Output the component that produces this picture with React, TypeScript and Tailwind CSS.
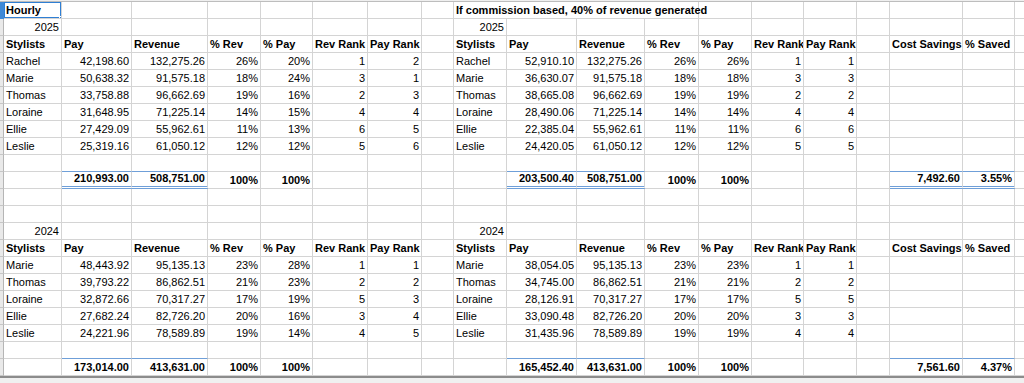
import React from 'react';

type Cell = { v?: string; r?: boolean; b?: boolean; span?: number; line?: 'top' | 'dbl' };

// column widths in px (row header strip excluded)
const cols = [
  'w-[58px]', 'w-[70px]', 'w-[76px]', 'w-[53px]', 'w-[52px]', 'w-[55px]', 'w-[54px]', 'w-[32px]',
  'w-[53px]', 'w-[70px]', 'w-[68px]', 'w-[54px]', 'w-[53px]', 'w-[52px]', 'w-[53px]', 'w-[33px]',
  'w-[73px]', 'w-[52px]',
];

const headers = ['Stylists', 'Pay', 'Revenue', '% Rev', '% Pay', 'Rev Rank', 'Pay Rank'];

const hourly2025 = [
  ['Rachel', '42,198.60', '132,275.26', '26%', '20%', '1', '2'],
  ['Marie', '50,638.32', '91,575.18', '18%', '24%', '3', '1'],
  ['Thomas', '33,758.88', '96,662.69', '19%', '16%', '2', '3'],
  ['Loraine', '31,648.95', '71,225.14', '14%', '15%', '4', '4'],
  ['Ellie', '27,429.09', '55,962.61', '11%', '13%', '6', '5'],
  ['Leslie', '25,319.16', '61,050.12', '12%', '12%', '5', '6'],
];

const commission2025 = [
  ['Rachel', '52,910.10', '132,275.26', '26%', '26%', '1', '1'],
  ['Marie', '36,630.07', '91,575.18', '18%', '18%', '3', '3'],
  ['Thomas', '38,665.08', '96,662.69', '19%', '19%', '2', '2'],
  ['Loraine', '28,490.06', '71,225.14', '14%', '14%', '4', '4'],
  ['Ellie', '22,385.04', '55,962.61', '11%', '11%', '6', '6'],
  ['Leslie', '24,420.05', '61,050.12', '12%', '12%', '5', '5'],
];

const hourly2024 = [
  ['Marie', '48,443.92', '95,135.13', '23%', '28%', '1', '1'],
  ['Thomas', '39,793.22', '86,862.51', '21%', '23%', '2', '2'],
  ['Loraine', '32,872.66', '70,317.27', '17%', '19%', '5', '3'],
  ['Ellie', '27,682.24', '82,726.20', '20%', '16%', '3', '4'],
  ['Leslie', '24,221.96', '78,589.89', '19%', '14%', '4', '5'],
];

const commission2024 = [
  ['Marie', '38,054.05', '95,135.13', '23%', '23%', '1', '1'],
  ['Thomas', '34,745.00', '86,862.51', '21%', '21%', '2', '2'],
  ['Loraine', '28,126.91', '70,317.27', '17%', '17%', '5', '5'],
  ['Ellie', '33,090.48', '82,726.20', '20%', '20%', '3', '3'],
  ['Leslie', '31,435.96', '78,589.89', '19%', '19%', '4', '4'],
];

type Row = Record<number, Cell>;

function block(left: string[], right: string[]): Row {
  const row: Row = {};
  left.forEach((v, i) => (row[i] = { v, r: i > 0 }));
  right.forEach((v, i) => (row[8 + i] = { v, r: i > 0 }));
  return row;
}

function headerRow(): Row {
  const row: Row = {};
  headers.forEach((v, i) => {
    row[i] = { v, b: true };
    row[8 + i] = { v, b: true };
  });
  row[16] = { v: 'Cost Savings', b: true };
  row[17] = { v: '% Saved', b: true };
  return row;
}

const lineAbove: Row = { 1: { line: 'top' }, 2: { line: 'top' }, 9: { line: 'top' }, 10: { line: 'top' }, 16: { line: 'top' }, 17: { line: 'top' } };

function totals(vals: string[], dbl: boolean): Row {
  const at = [1, 2, 3, 4, 9, 10, 11, 12, 16, 17];
  const row: Row = {};
  at.forEach((c, i) => {
    const boxed = [1, 2, 9, 10, 16, 17].includes(c);
    row[c] = { v: vals[i], r: true, b: true, line: dbl && boxed ? 'dbl' : undefined };
  });
  return row;
}

const sheet: Row[] = [
  { 0: { v: 'Hourly', b: true }, 8: { v: 'If commission based, 40% of revenue generated', b: true, span: 4 } },
  { 0: { v: '2025', r: true }, 8: { v: '2025', r: true } },
  headerRow(),
  ...hourly2025.map((h, i) => block(h, commission2025[i])),
  lineAbove,
  totals(['210,993.00', '508,751.00', '100%', '100%', '203,500.40', '508,751.00', '100%', '100%', '7,492.60', '3.55%'], true),
  {},
  {},
  { 0: { v: '2024', r: true }, 8: { v: '2024', r: true } },
  headerRow(),
  ...hourly2024.map((h, i) => block(h, commission2024[i])),
  lineAbove,
  totals(['173,014.00', '413,631.00', '100%', '100%', '165,452.40', '413,631.00', '100%', '100%', '7,561.60', '4.37%'], false),
];

const spanWidth: Record<number, string> = { 4: 'w-[245px]' };

function SheetRow({ row, index }: { row: Row; index: number }) {
  const cells: React.ReactNode[] = [];
  let c = 0;
  while (c < cols.length) {
    const cell = row[c] ?? {};
    const width = cell.span ? spanWidth[cell.span] : cols[c];
    const bottom =
      cell.line === 'top'
        ? 'border-b-[#6f9fd8]'
        : cell.line === 'dbl'
          ? 'border-b-[3px] border-double border-b-[#6f9fd8]'
          : 'border-b-[#d4d4d4]';
    cells.push(
      <div
        key={c}
        className={`relative h-[17px] shrink-0 box-border flex items-end border-r border-b border-r-[#d4d4d4] px-[2px] pb-[1px] leading-[14px] whitespace-nowrap ${width} ${bottom} ${
          cell.r ? 'justify-end' : 'justify-start'
        } ${cell.b ? 'font-bold' : ''} ${cell.span ? 'overflow-visible' : 'overflow-hidden'}`}
      >
        {cell.v}
        {index === 0 && c === 0 && (
          <>
            <div className="absolute -left-px -top-px -right-px -bottom-px border-2 border-[#2f7fd4]" />
            <div className="absolute -right-[4px] -bottom-[4px] w-[6px] h-[6px] bg-[#2f7fd4] border border-white" />
          </>
        )}
      </div>
    );
    c += cell.span ?? 1;
  }
  return (
    <div className="flex h-[17px]">
      <div
        className={`w-[4px] shrink-0 h-[17px] box-border border-b border-r ${
          index === 0 ? 'bg-[#3f89d6] border-[#3f89d6]' : 'bg-[#e9e9e9] border-b-[#c6c6c6] border-r-[#b5b5b5]'
        }`}
      />
      {cells}
      <div className="flex-1 h-[17px] box-border border-b border-[#d4d4d4]" />
    </div>
  );
}

export default function App() {
  return (
    <div className="w-[1024px] h-[383px] overflow-hidden bg-white text-black text-[11px] font-['Liberation_Sans',Arial,sans-serif] flex flex-col">
      {/* column header edge */}
      <div className="h-[2px] shrink-0 bg-[#efefef] border-b border-[#bdbdbd] box-border" />
      {sheet.map((row, i) => (
        <SheetRow key={i} row={row} index={i} />
      ))}
      {/* sheet tab area */}
      <div className="flex-1 border-t-2 border-[#8c8c8c] bg-[#f0f0f0]" />
    </div>
  );
}
